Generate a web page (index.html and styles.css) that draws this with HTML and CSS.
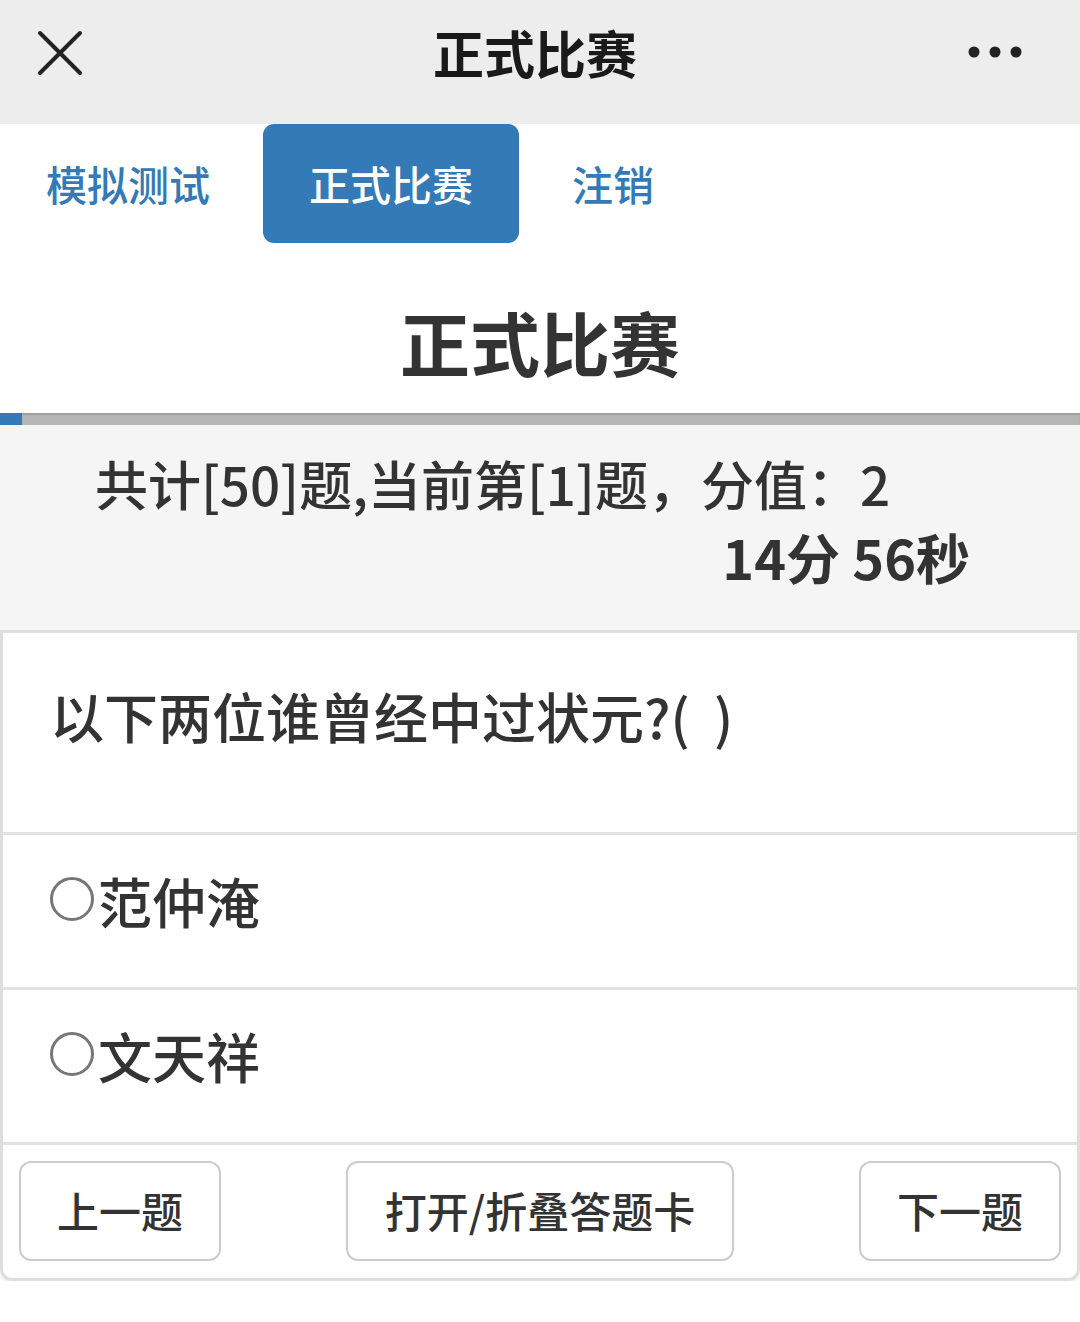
FILE: index.html
```html
<!DOCTYPE html>
<html lang="zh-CN">
<head>
<meta charset="utf-8">
<title>正式比赛</title>
<link rel="stylesheet" href="styles.css">
</head>
<body>
<header class="topbar">
  <svg class="close" width="46" height="46" viewBox="0 0 46 46"><path d="M3 3 L43 43 M43 3 L3 43" stroke="#222" stroke-width="4" stroke-linecap="round" fill="none"/></svg>
  <div class="topbar-title">正式比赛</div>
  <svg class="more" width="56" height="14" viewBox="0 0 56 14"><circle cx="7" cy="7" r="5.5" fill="#222"/><circle cx="28" cy="7" r="5.5" fill="#222"/><circle cx="49" cy="7" r="5.5" fill="#222"/></svg>
</header>
<nav class="tabs">
  <a class="tab">模拟测试</a>
  <a class="tab active">正式比赛</a>
  <a class="tab">注销</a>
</nav>
<h1 class="page-title">正式比赛</h1>
<div class="progress"><div class="progress-bar" style="width:22px"></div></div>
<section class="info">
  <div class="info-line">共计[50]题,当前第[1]题，分值：2</div>
  <div class="timer">14分 56秒</div>
</section>
<section class="card">
  <div class="question">以下两位谁曾经中过状元?(&nbsp; )</div>
  <div class="option"><span class="radio"></span>范仲淹</div>
  <div class="option"><span class="radio"></span>文天祥</div>
  <div class="actions">
    <button class="btn btn-small">上一题</button>
    <button class="btn btn-wide">打开/折叠答题卡</button>
    <button class="btn btn-small">下一题</button>
  </div>
</section>
</body>
</html>
```
FILE: styles.css
```css
* { box-sizing: border-box; }
html, body { margin: 0; padding: 0; background: #fff; }
body {
  font-family: "Noto Sans CJK SC", "Noto Sans", sans-serif;
  color: #333;
  width: 1080px;
}
.topbar {
  height: 124px;
  background: #ededed;
  display: flex;
  align-items: center;
  justify-content: space-between;
  padding: 0 57px 0 37px;
  position: relative;
}
.topbar-title {
  position: absolute;
  left: 0; right: 0;
  top: 21px;
  text-align: center;
  font-size: 51px;
  line-height: 62px;
  font-weight: 700;
  color: #1a1a1a;
  padding-right: 10px;
  pointer-events: none;
}
.close { margin-top: -18px; }
.more { margin-top: -20px; }
.tabs {
  height: 119px;
  display: flex;
  gap: 7px;
}
.tab {
  display: flex;
  align-items: center;
  padding: 0 46px 2px;
  font-size: 41px;
  font-weight: 500;
  color: #337ab7;
  border-radius: 11px;
}
.tab.active {
  background: #337ab7;
  color: #fff;
}
.page-title {
  margin: 0;
  padding: 57px 0 29px;
  text-align: center;
  font-size: 70px;
  line-height: 84px;
  font-weight: 700;
  color: #333;
}
.progress {
  height: 12px;
  background: #b5b5b5;
  box-shadow: inset 0 2px 1px rgba(0,0,0,0.12);
}
.progress-bar {
  height: 100%;
  background: #337ab7;
}
.info {
  background: #f5f5f5;
  height: 205px;
  padding: 22px 110px 0 95px;
  font-size: 53px;
  line-height: 73px;
  color: #333;
}
.info-line { font-weight: 500; white-space: nowrap; }
.timer {
  text-align: right;
  font-weight: 700;
  font-size: 54px;
}
.card {
  border: 3px solid #dedede;
  border-radius: 0 0 12px 12px;
  box-shadow: 0 2px 3px rgba(0,0,0,0.08);
  background: #fff;
}
.question {
  padding: 44px 47px 77px;
  font-size: 54px;
  line-height: 78px;
  font-weight: 500;
  border-bottom: 3px solid #e2e2e2;
}
.option {
  display: flex;
  align-items: center;
  padding: 27px 47px 47px;
  font-size: 54px;
  line-height: 78px;
  font-weight: 500;
  border-bottom: 3px solid #e2e2e2;
}
.radio {
  width: 44px;
  height: 44px;
  border: 3px solid #777;
  border-radius: 50%;
  margin-right: 4px;
  margin-top: -4px;
}
.actions {
  display: flex;
  justify-content: space-between;
  padding: 16px 16px 17px;
}
.btn {
  height: 100px;
  background: #fff;
  border: 2.5px solid #ccc;
  border-radius: 12px;
  font-family: inherit;
  font-size: 42px;
  font-weight: 500;
  color: #333;
  padding: 0 0 4px;
}
.btn-small { width: 202px; }
.btn-wide { width: 388px; }
```
